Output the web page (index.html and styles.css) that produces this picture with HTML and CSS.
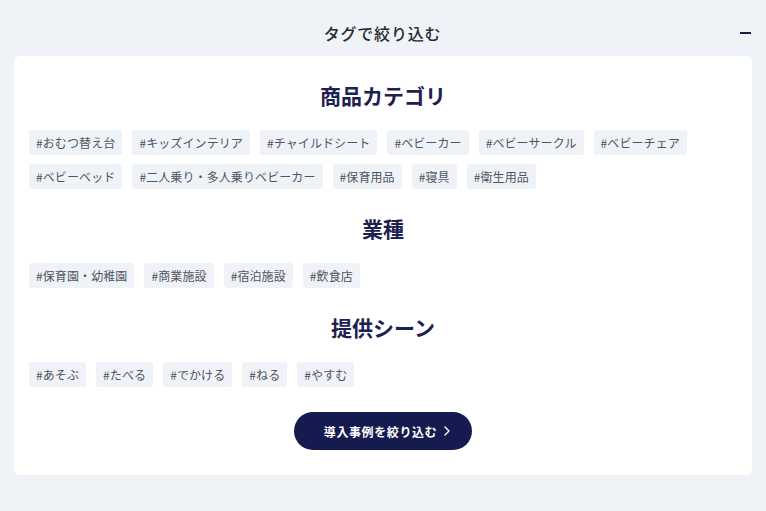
FILE: index.html
```html
<!DOCTYPE html>
<html lang="ja">
<head>
<meta charset="utf-8">
<title>タグで絞り込む</title>
<link rel="stylesheet" href="styles.css">
</head>
<body>
<div class="filter">
  <div class="filter-head">
    <span></span>
    <h1 class="filter-title">タグで絞り込む</h1>
    <span class="toggle" aria-label="閉じる"></span>
  </div>
  <div class="card">
    <section class="group">
      <h2 class="group-title">商品カテゴリ</h2>
      <ul class="tags">
        <li class="tag">#おむつ替え台</li>
        <li class="tag">#キッズインテリア</li>
        <li class="tag">#チャイルドシート</li>
        <li class="tag">#ベビーカー</li>
        <li class="tag">#ベビーサークル</li>
        <li class="tag">#ベビーチェア</li>
        <li class="tag">#ベビーベッド</li>
        <li class="tag">#二人乗り・多人乗りベビーカー</li>
        <li class="tag">#保育用品</li>
        <li class="tag">#寝具</li>
        <li class="tag">#衛生用品</li>
      </ul>
    </section>
    <section class="group">
      <h2 class="group-title">業種</h2>
      <ul class="tags">
        <li class="tag">#保育園・幼稚園</li>
        <li class="tag">#商業施設</li>
        <li class="tag">#宿泊施設</li>
        <li class="tag">#飲食店</li>
      </ul>
    </section>
    <section class="group">
      <h2 class="group-title">提供シーン</h2>
      <ul class="tags">
        <li class="tag">#あそぶ</li>
        <li class="tag">#たべる</li>
        <li class="tag">#でかける</li>
        <li class="tag">#ねる</li>
        <li class="tag">#やすむ</li>
      </ul>
    </section>
    <div class="actions">
      <button class="submit" type="button">導入事例を絞り込む<svg class="chev" width="6" height="10" viewBox="0 0 6 10"><path d="M1 1l4 4-4 4" fill="none" stroke="#fff" stroke-width="1.4" stroke-linecap="round" stroke-linejoin="round"/></svg></button>
    </div>
  </div>
</div>
</body>
</html>
```
FILE: styles.css
```css
html, body {
  margin: 0;
  padding: 0;
  background: #eff3f8;
}
body {
  font-family: "Noto Sans CJK JP", "Noto Sans", sans-serif;
  color: #222;
}
.filter {
  width: 766px;
  height: 511px;
}
.filter-head {
  height: 56px;
  display: grid;
  grid-template-columns: 1fr auto 1fr;
  align-items: center;
  padding: 0 15px 0 14px;
  box-sizing: border-box;
}
.filter-title {
  margin: 0;
  font-size: 16px;
  font-weight: 500;
  letter-spacing: 0.05em;
  line-height: 24px;
  color: #2a2a2e;
  padding-top: 10px;
}
.toggle {
  justify-self: end;
  width: 11px;
  height: 2px;
  background: #1a1f4e;
  margin-top: 10px;
}
.card {
  margin: 0 14px;
  background: #fff;
  border-radius: 6px;
  padding: 24px 15px 25px;
}
.group + .group {
  margin-top: 24px;
}
.group-title {
  margin: 0 0 20px;
  text-align: center;
  font-size: 21px;
  line-height: 30px;
  font-weight: 700;
  color: #1c2150;
}
.tags {
  list-style: none;
  margin: 0;
  padding: 0;
  display: flex;
  flex-wrap: wrap;
  gap: 9px 10px;
}
.tag {
  background: #eff3f8;
  border-radius: 3px;
  padding: 0 7px;
  font-size: 12px;
  line-height: 25px;
  letter-spacing: 0.1px;
  color: #50545f;
}
.actions {
  margin-top: 25px;
  display: flex;
  justify-content: center;
}
.submit {
  width: 178px;
  height: 38px;
  border: 0;
  border-radius: 19px;
  background: #161b4f;
  color: #fff;
  font-family: inherit;
  font-size: 12px;
  font-weight: 700;
  letter-spacing: 0.05em;
  display: flex;
  align-items: center;
  justify-content: center;
  gap: 7px;
  padding: 0 0 0 8px;
}
.chev {
  display: block;
}
```
